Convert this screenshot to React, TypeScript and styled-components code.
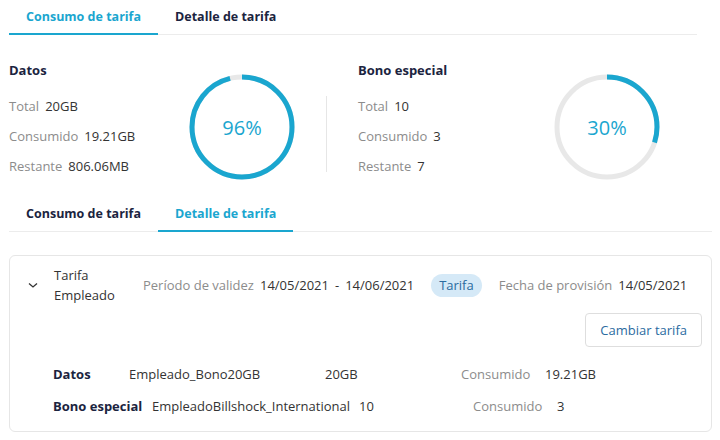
import React from 'react'
import styled, { createGlobalStyle } from 'styled-components'

const GlobalStyle = createGlobalStyle`
  body {
    margin: 0;
    background: #ffffff;
    font-family: "Open Sans", "Noto Sans", Arial, sans-serif;
    font-size: 13px;
    color: #262626;
  }
`

const ACCENT = '#1aa6cf'

const Page = styled.div`
  width: 720px;
  height: 440px;
  padding: 0 8px 0 9px;
  box-sizing: border-box;
  overflow: hidden;
`

const TabBar = styled.div<{ $inset?: number }>`
  display: flex;
  height: 34px;
  border-bottom: 1px solid #ececec;
  margin-right: ${({ $inset }) => $inset || 0}px;
`

const Tab = styled.div<{ $active?: boolean }>`
  display: flex;
  align-items: center;
  padding: 0 17px;
  font-weight: 700;
  font-size: 12.5px;
  color: ${({ $active }) => ($active ? ACCENT : '#1b2440')};
  border-bottom: 2px solid ${({ $active }) => ($active ? ACCENT : 'transparent')};
  margin-bottom: -1px;
`

const Stats = styled.div`
  display: flex;
  padding-top: 25px;
  height: 137px;
`

const Panel = styled.div`
  display: flex;
  align-items: flex-start;
`

const Info = styled.div<{ $width: number }>`
  width: ${({ $width }) => $width}px;
  display: flex;
  flex-direction: column;
  gap: 10px;
`

const Heading = styled.div`
  font-weight: 700;
  font-size: 13px;
  line-height: 20px;
  color: #1b2440;
  margin-bottom: 6px;
`

const Line = styled.div`
  display: flex;
  gap: 6px;
  line-height: 20px;
`

const Label = styled.span`
  color: #8c8c8c;
`

const Value = styled.span`
  color: #333333;
`

const RingBox = styled.div`
  position: relative;
  width: 106px;
  height: 106px;
  margin-top: 14px;
`

const RingText = styled.div`
  position: absolute;
  inset: 0;
  display: flex;
  align-items: center;
  justify-content: center;
  font-size: 20px;
  color: ${ACCENT};
`

const VDivider = styled.div`
  width: 1px;
  height: 76px;
  background: #e6e6e6;
  margin: 36px 31px 0 31px;
`

const Card = styled.div`
  margin-top: 23px;
  border: 1px solid #e6e6e6;
  border-radius: 6px;
  padding: 9px 9px 15px 17px;
`

const Header = styled.div`
  display: flex;
  align-items: center;
  line-height: 20px;
  white-space: nowrap;
`

const Chevron = styled.div`
  flex: none;
  width: 12px;
  display: flex;
  margin-right: 15px;
`

const Name = styled.div`
  flex: none;
  width: 89px;
  color: #333333;
`

const Field = styled.div`
  flex: none;
  display: flex;
  gap: 6px;
`

const Dates = styled.span`
  display: flex;
  gap: 6px;
  color: #333333;
`

const Badge = styled.span`
  flex: none;
  background: #d5e9f7;
  color: #2b6b9f;
  border-radius: 12px;
  padding: 0 8px;
  line-height: 23px;
  margin: 0 17px;
`

const Actions = styled.div`
  display: flex;
  justify-content: flex-end;
  margin-top: 8px;
`

const Button = styled.button`
  font-family: inherit;
  font-size: 13px;
  color: #2b6b9f;
  background: #ffffff;
  border: 1px solid #dedede;
  border-radius: 4px;
  height: 34px;
  padding: 0 14px;
`

const Details = styled.div`
  display: flex;
  flex-direction: column;
  gap: 12px;
  margin-top: 17px;
  padding-left: 26px;
`

const DetailRow = styled.div`
  display: flex;
  line-height: 20px;
`

const Cell = styled.span<{ $width?: number; $strong?: boolean; $muted?: boolean }>`
  width: ${({ $width }) => ($width ? `${$width}px` : 'auto')};
  flex: none;
  white-space: nowrap;
  font-weight: ${({ $strong }) => ($strong ? 700 : 400)};
  color: ${({ $strong, $muted }) => ($strong ? '#1b2440' : $muted ? '#8c8c8c' : '#333333')};
`

const Ring = ({ pct }: { pct: number }) => {
  const r = 50
  const c = 2 * Math.PI * r
  return (
    <RingBox>
      <svg width="106" height="106" viewBox="0 0 106 106">
        <circle cx="53" cy="53" r={r} fill="none" stroke="#e8e8e8" strokeWidth="5" />
        <circle
          cx="53"
          cy="53"
          r={r}
          fill="none"
          stroke={ACCENT}
          strokeWidth="5"
          strokeDasharray={`${(c * pct) / 100} ${c}`}
          transform="rotate(-90 53 53)"
        />
      </svg>
      <RingText>{pct}%</RingText>
    </RingBox>
  )
}

type Stat = { label: string; value: string }

const StatPanel = ({ title, rows, pct, width }: { title: string; rows: Stat[]; pct: number; width: number }) => (
  <Panel>
    <Info $width={width}>
      <Heading>{title}</Heading>
      {rows.map((r) => (
        <Line key={r.label}>
          <Label>{r.label}</Label>
          <Value>{r.value}</Value>
        </Line>
      ))}
    </Info>
    <Ring pct={pct} />
  </Panel>
)

export default function App() {
  return (
    <Page>
      <GlobalStyle />
      <TabBar $inset={15}>
        <Tab $active>Consumo de tarifa</Tab>
        <Tab>Detalle de tarifa</Tab>
      </TabBar>

      <Stats>
        <StatPanel
          title="Datos"
          pct={96}
          width={180}
          rows={[
            { label: 'Total', value: '20GB' },
            { label: 'Consumido', value: '19.21GB' },
            { label: 'Restante', value: '806.06MB' },
          ]}
        />
        <VDivider />
        <StatPanel
          title="Bono especial"
          pct={30}
          width={196}
          rows={[
            { label: 'Total', value: '10' },
            { label: 'Consumido', value: '3' },
            { label: 'Restante', value: '7' },
          ]}
        />
      </Stats>

      <TabBar>
        <Tab>Consumo de tarifa</Tab>
        <Tab $active>Detalle de tarifa</Tab>
      </TabBar>

      <Card>
        <Header>
          <Chevron>
            <svg width="12" height="12" viewBox="0 0 12 12">
              <path d="M2 4.5 L6 8 L10 4.5" fill="none" stroke="#333" strokeWidth="1.3" />
            </svg>
          </Chevron>
          <Name>
            Tarifa
            <br />
            Empleado
          </Name>
          <Field>
            <Label>Período de validez</Label>
            <Dates>
              <span>14/05/2021</span>
              <span>-</span>
              <span>14/06/2021</span>
            </Dates>
          </Field>
          <Badge>Tarifa</Badge>
          <Field>
            <Label>Fecha de provisión</Label>
            <Value>14/05/2021</Value>
          </Field>
        </Header>
        <Actions>
          <Button>Cambiar tarifa</Button>
        </Actions>
        <Details>
          <DetailRow>
            <Cell $strong $width={76}>Datos</Cell>
            <Cell $width={196}>Empleado_Bono20GB</Cell>
            <Cell $width={136}>20GB</Cell>
            <Cell $muted $width={84}>Consumido</Cell>
            <Cell>19.21GB</Cell>
          </DetailRow>
          <DetailRow>
            <Cell $strong $width={99}>Bono especial</Cell>
            <Cell $width={207}>EmpleadoBillshock_International</Cell>
            <Cell $width={114}>10</Cell>
            <Cell $muted $width={84}>Consumido</Cell>
            <Cell>3</Cell>
          </DetailRow>
        </Details>
      </Card>
    </Page>
  )
}
